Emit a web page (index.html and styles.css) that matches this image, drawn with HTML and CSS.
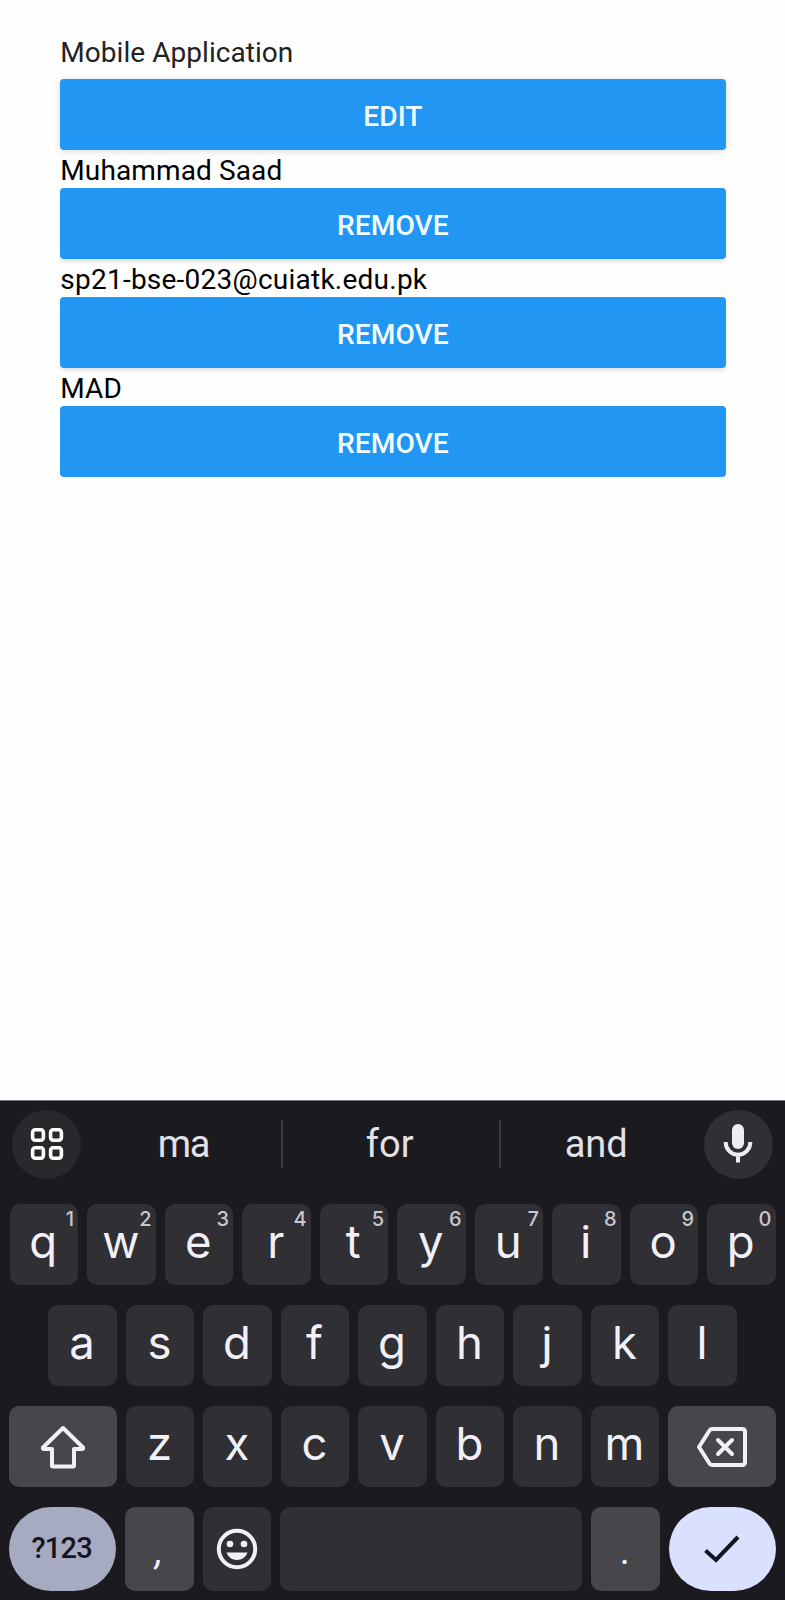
FILE: index.html
```
<!DOCTYPE html>
<html lang="en">
<head>
<meta charset="utf-8">
<title>Mobile Application</title>
<link rel="stylesheet" href="styles.css">
</head>
<body>
<div class="screen">
  <main class="content">
    <div class="field">Mobile Application</div>
    <button class="btn raised">EDIT</button>
    <div class="item">Muhammad Saad</div>
    <button class="btn">REMOVE</button>
    <div class="item email">sp21-bse-023@cuiatk.edu.pk</div>
    <button class="btn">REMOVE</button>
    <div class="item">MAD</div>
    <button class="btn last">REMOVE</button>
  </main>
  <section class="keyboard">
    <div class="suggestions">
      <div class="round dim">
        <svg width="34" height="34" viewBox="0 0 34 34" fill="none" stroke="#fff" stroke-width="3.6"><rect x="2.6" y="2.8" width="10.8" height="10.4" rx="2.6"/><rect x="20.6" y="2.8" width="10.8" height="10.4" rx="2.6"/><rect x="2.6" y="20.8" width="10.8" height="10.4" rx="2.6"/><rect x="20.6" y="20.8" width="10.8" height="10.4" rx="2.6"/></svg>
      </div>
      <div class="word first">ma</div>
      <div class="divider"></div>
      <div class="word">for</div>
      <div class="divider"></div>
      <div class="word third">and</div>
      <div class="round">
        <svg class="mic" width="30" height="40" viewBox="0 0 30 40"><rect x="9" y="1" width="12" height="25" rx="6" fill="#efedf4"/><path d="M2.7 19v.5a12.3 12.3 0 0 0 24.6 0V19M15 32v7.500" fill="none" stroke="#efedf4" stroke-width="4"/></svg>
      </div>
    </div>
    <div class="row">
      <div class="key">q<sup>1</sup></div><div class="key">w<sup>2</sup></div><div class="key">e<sup>3</sup></div><div class="key">r<sup>4</sup></div><div class="key">t<sup>5</sup></div><div class="key">y<sup>6</sup></div><div class="key">u<sup>7</sup></div><div class="key dot">i<sup>8</sup></div><div class="key">o<sup>9</sup></div><div class="key">p<sup>0</sup></div>
    </div>
    <div class="row">
      <div class="key">a</div><div class="key">s</div><div class="key">d</div><div class="key">f</div><div class="key">g</div><div class="key">h</div><div class="key dot">j</div><div class="key">k</div><div class="key">l</div>
    </div>
    <div class="row">
      <div class="key wide mod">
        <svg width="46" height="44" viewBox="0 0 46 44" fill="none" stroke="#f2f0f7" stroke-width="4" stroke-linejoin="round"><path d="M23 3 3 22.500Q2.500 24 4 24H12V40.500Q12 41.500 13 41.500H33Q34 41.500 34 40.500V24H42Q43.500 24 43 22.500Z"/></svg>
      </div>
      <div class="key">z</div><div class="key">x</div><div class="key">c</div><div class="key">v</div><div class="key">b</div><div class="key">n</div><div class="key">m</div>
      <div class="key wide mod erase">
        <svg width="52" height="42" viewBox="0 0 52 42" fill="none" stroke="#f2f0f7" stroke-width="4" stroke-linejoin="round"><path d="M16 3H46Q49 3 49 6V36Q49 39 46 39H16Q14.500 39 13.500 37.500L3 21 13.500 4.500Q14.500 3 16 3Z"/><path stroke-linecap="round" d="m22 14 14 14M36 14 22 28"/></svg>
      </div>
    </div>
    <div class="row bottom">
      <div class="key wide symbols">?123</div>
      <div class="key mod mark slant">,</div>
      <div class="key face">
        <svg width="42" height="42" viewBox="0 0 42 42"><circle cx="21" cy="21" r="18.200" fill="none" stroke="#f2f0f7" stroke-width="4"/><circle cx="14" cy="16" r="3.300" fill="#f2f0f7"/><circle cx="28" cy="16" r="3.300" fill="#f2f0f7"/><path d="M10.500 24.500H31.500C30 29 26 32 21 32S12 29 10.500 24.500Z" fill="#f2f0f7"/></svg>
      </div>
      <div class="key space"></div>
      <div class="key mod mark">.</div>
      <div class="key wide enter">
        <svg width="36" height="28" viewBox="0 0 36 28" fill="none" stroke="#14161f" stroke-width="4"><path d="M1.500 15.500 12 25 34 2"/></svg>
      </div>
    </div>
  </section>
</div>
</body>
</html>
```

FILE: styles.css
```
body {
  margin: 0;
  background: #fefefe;
  font-family: Roboto, "Liberation Sans", sans-serif;
}

.screen {
  display: flex;
  flex-direction: column;
  height: 1600px;
  overflow: hidden;
}

.content {
  display: flex;
  flex-direction: column;
  flex: 1;
  padding: 30px 59.5px 0 60.3px;
  font-size: 28px;
}

.field {
  height: 49.300px;
  letter-spacing: .05px;
  line-height: 46px;
  color: #222;
}

.item {
  height: 38.400px;
  letter-spacing: .12px;
  line-height: 42px;
  color: #000;
}

.email {
  letter-spacing: .24px;
}

.btn {
  height: 70.600px;
  padding: 3px 0 0;
  border: 0;
  border-radius: 4px;
  background: #2196f3;
  color: #f2fdff;
  font: 500 28.200px Roboto, "Liberation Sans", sans-serif;
  box-shadow: 0 4px 5px -2px rgba(0, 0, 0, .15);
}

.raised {
  box-shadow: 0 1px 7px rgba(0, 0, 0, .15);
}

.last {
  box-shadow: none;
}

.keyboard {
  box-sizing: border-box;
  display: flex;
  flex-direction: column;
  gap: 20px;
  height: 500px;
  padding: 8.500px 9px 0;
  border-top: 1px solid #77777b;
  background: #1b1a1f;
}

.suggestions {
  display: flex;
  align-items: center;
  height: 69px;
  margin: 0 3.300px 5.900px 3.300px;
}

.round {
  display: flex;
  align-items: center;
  justify-content: center;
  width: 69px;
  height: 69px;
  border-radius: 50%;
  background: #302f34;
}

.dim {
  background: #29282d;
}

.mic {
  margin-top: -3px;
}

.word {
  width: 216px;
  color: #e3e1e8;
  font-size: 38px;
  text-align: center;
  text-indent: -2px;
}

.word.first {
  width: 199.500px;
  letter-spacing: -1.200px;
  text-indent: 5px;
}

.word.third {
  width: 203px;
  text-indent: -12px;
}

.divider {
  width: 2px;
  height: 48px;
  background: #3e3d42;
}

.row {
  display: flex;
  justify-content: center;
  gap: 9px;
  height: 81px;
}

.key {
  position: relative;
  box-sizing: border-box;
  display: flex;
  align-items: center;
  justify-content: center;
  width: 68.500px;
  border-radius: 10px;
  background: #302f34;
  color: #f2f0f7;
  font: 400 45.500px Inter, Roboto, sans-serif;
  padding: 0 1px 6px 0;
}

.key svg {
  margin-top: 6px;
}

.dot {
  font-family: Roboto, sans-serif;
  font-size: 47px;
}

.key sup {
  position: absolute;
  top: 4px;
  right: 4px;
  color: #c8c6cd;
  font: 500 20px/22px Inter, Roboto, sans-serif;
}

.wide {
  width: 107.400px;
}

.mod {
  background: #47464b;
}

.erase {
  padding-right: 0;
}

.bottom {
  height: 84px;
}

.space {
  flex: 1;
}

.mark {
  font: 400 38px Roboto, sans-serif;
  padding: 4px 1px 0 0;
}

.slant {
  font-style: italic;
}

.symbols {
  border-radius: 42px;
  background: #a6abc2;
  color: #14161f;
  font: 500 29px Roboto, sans-serif;
  letter-spacing: -.8px;
  padding: 0 2px 2px 0;
}

.face {
  padding-bottom: 7px;
}

.enter {
  border-radius: 42px;
  background: #dae1ff;
  padding: 0 0 1px;
}

.enter svg {
  margin: 0;
}
```
